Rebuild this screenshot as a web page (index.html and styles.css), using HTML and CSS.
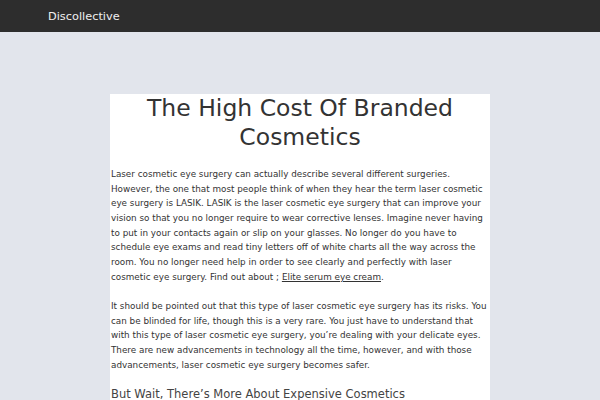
FILE: index.html
```html
<!DOCTYPE html>
<html lang="en">
<head>
<meta charset="utf-8">
<title>The High Cost Of Branded Cosmetics</title>
<link rel="stylesheet" href="styles.css">
</head>
<body>
<header class="topbar">
  <span class="brand">Discollective</span>
</header>
<main class="main">
  <article class="post">
    <h1 class="post-title">The High Cost Of Branded Cosmetics</h1>
    <p class="post-text">Laser cosmetic eye surgery can actually describe several different surgeries. However, the one that most people think of when they hear the term laser cosmetic eye surgery is LASIK. LASIK is the laser cosmetic eye surgery that can improve your vision so that you no longer require to wear corrective lenses. Imagine never having to put in your contacts again or slip on your glasses. No longer do you have to schedule eye exams and read tiny letters off of white charts all the way across the room. You no longer need help in order to see clearly and perfectly with laser cosmetic eye surgery. Find out about ; <a class="post-link" href="#">Elite serum eye cream</a>.</p>
    <p class="post-text">It should be pointed out that this type of laser cosmetic eye surgery has its risks. You can be blinded for life, though this is a very rare. You just have to understand that with this type of laser cosmetic eye surgery, you’re dealing with your delicate eyes. There are new advancements in technology all the time, however, and with those advancements, laser cosmetic eye surgery becomes safer.</p>
    <h2 class="post-subtitle">But Wait, There’s More About Expensive Cosmetics</h2>
  </article>
</main>
</body>
</html>
```
FILE: styles.css
```css
html, body {
  margin: 0;
  padding: 0;
}
body {
  background: #e2e5ec;
  font-family: "DejaVu Sans", Verdana, sans-serif;
  color: #333;
}
.topbar {
  height: 32px;
  background: #2d2d2d;
  display: flex;
  align-items: center;
  padding-left: 48px;
}
.brand {
  color: #f0f0f0;
  font-size: 11.33px;
  line-height: 1;
  margin-top: 1px;
}
.main {
  padding: 62px 0 0 110px;
}
.post {
  width: 380px;
  background: #fff;
  padding: 0 0 20px 0;
}
.post-title {
  margin: 0 0 15px 0;
  font-size: 23.5px;
  line-height: 29px;
  font-weight: normal;
  text-align: center;
  color: #333;
}
.post-text {
  margin: 0 0 14.67px 0;
  padding-left: 1px;
  font-size: 8.8px;
  line-height: 14.67px;
  color: #333;
}
.post-link {
  color: #333;
  text-decoration: underline;
}
.post-subtitle {
  margin: 14px 0 0 1px;
  font-size: 11.5px;
  line-height: 14px;
  font-weight: normal;
  color: #444;
}
```
